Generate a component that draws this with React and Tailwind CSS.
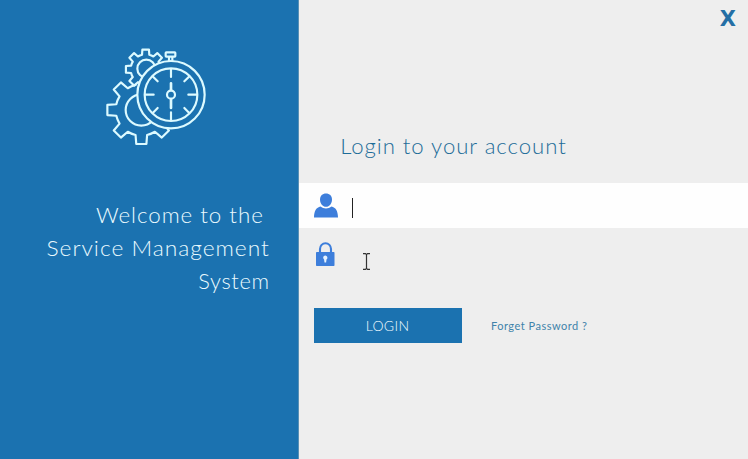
const gearPath = (cx, cy, root, tip, baseHalf, tipHalf) => {
  const point = (r, deg) => {
    const a = (deg * Math.PI) / 180;
    return `${(cx + r * Math.cos(a)).toFixed(1)} ${(cy + r * Math.sin(a)).toFixed(1)}`;
  };
  let d = "";
  for (let i = 0; i < 8; i++) {
    const a = i * 45;
    d += `${i === 0 ? "M" : `A${root} ${root} 0 0 1 `}${point(root, a - baseHalf)}`;
    d += `L${point(tip, a - tipHalf)}L${point(tip, a + tipHalf)}L${point(root, a + baseHalf)}`;
  }
  return `${d}A${root} ${root} 0 0 1 ${point(root, -baseHalf)}Z`;
};

function ServiceLogo() {
  return (
    <svg
      className="block h-[115px] w-[120px] fill-[#1b72b0] stroke-[#dcfaff]"
      viewBox="0 0 360 345"
      strokeWidth="6.5"
      strokeLinejoin="round"
      strokeLinecap="round"
    >
      <path d={gearPath(139, 210, 77, 103, 13, 8.5)} />
      <circle cx="139" cy="210" r="47" />
      <path d={gearPath(152, 88, 45, 60, 14, 9.5)} />
      <circle cx="154" cy="86" r="27" />
      <path d="M222 50v14M232 50v14" />
      <rect x="212" y="37" width="29" height="13" rx="2" />
      <circle cx="228" cy="164" r="101" />
      <circle cx="228" cy="164" r="79" />
      <path d="M228 87v24M228 217v24M151 164h25M280 164h25M174 110l14 14M268 204l14 14M174 218l14-14M268 124l14-14" />
      <path d="M228 130v21M228 177v27" strokeWidth="8" />
      <circle cx="228" cy="164" r="12" />
    </svg>
  );
}

function UserIcon() {
  return (
    <svg className="block h-[25px] w-[24px] fill-[#3d7edb]" viewBox="0 0 24 25">
      <path d="M12 0.500C8.500 0.500 6 2.800 6 6.500c0 4 2.600 7.300 6 7.300s6-3.300 6-7.300C18 2.800 15.500 0.500 12 0.500Z" />
      <path d="M6.500 13.500C9.500 16 14.500 16 17.500 13.500C21.500 14.300 24 18 24 24.500H0C0 18 2.500 14.300 6.500 13.500Z" />
    </svg>
  );
}

function LockIcon() {
  return (
    <svg className="block h-[25px] w-[19px]" viewBox="0 0 19 25">
      <path d="M4 12V7a5.500 5.800 0 0 1 11 0V12" fill="none" stroke="#3d7edb" strokeWidth="2.100" />
      <rect y="10" width="18.500" height="14" rx="0.700" fill="#3d7edb" />
      <path d="M9.200 13.500a2.200 2.200 0 0 1 1.300 4l-.4 3H8.500l-.4-3a2.200 2.200 0 0 1 1.100-4Z" fill="#e5f2ff" />
    </svg>
  );
}

export default function App() {
  return (
    <div className="flex h-[459px] w-[748px] overflow-hidden bg-[#eeeeee] font-['Century_Gothic','Lato',sans-serif]">
      <aside className="h-full w-[299px] shrink-0 border-r border-[#5a91b5] bg-[#1b72b0] pt-10">
        <div className="pl-[95px]">
          <ServiceLogo />
        </div>
        <div className="mt-[43px] flex flex-col items-end pr-7 text-[21px] leading-[33px] font-light text-[#eafaff]">
          <p className="mr-[6px] origin-right scale-x-[1.064] tracking-[0.9px]">Welcome to the</p>
          <p className="origin-right scale-x-[1.085] tracking-[0.9px]">Service Management</p>
          <p className="origin-right scale-x-[1.04] tracking-[0.6px]">System</p>
        </div>
      </aside>

      <main className="flex min-w-0 flex-1 flex-col">
        <div className="flex h-[130px] justify-end pt-1 pr-3">
          <button className="h-[30px] font-['DejaVu_Sans',sans-serif] text-[21px] leading-[30px] font-bold text-[#246fa5]">
            X
          </button>
        </div>
        <h1 className="h-[53px] origin-left scale-x-[1.056] pl-[39px] text-[21px] leading-[31px] font-light tracking-[0.9px] whitespace-nowrap text-[#1d6c98]">
          Login to your account
        </h1>
        <div className="flex h-[45px] items-center bg-[#fefefe] pl-[15px]">
          <UserIcon />
          <div className="mt-1 ml-[14px] h-5 w-px bg-[#222222]" />
        </div>
        <div className="flex h-[80px] items-start pt-[14px] pl-[17px]">
          <LockIcon />
          <svg className="mt-[11px] ml-[27px] h-[17px] w-[9px]" viewBox="0 0 9 17" fill="none" stroke="#333333" strokeWidth="1.200">
            <path d="M1 .700h2.500l1 1 1-1H8M4.500 1.500v14M1 16.300h2.500l1-1 1 1H8" />
          </svg>
        </div>
        <div className="flex h-[35px] items-center pl-[15px]">
          <button className="h-[35px] w-[148px] bg-[#1b72b0] pr-px text-[14px] font-light tracking-[0.3px] text-[#f0fcff]">
            LOGIN
          </button>
          <a className="mt-[2px] ml-[29px] text-[11px] tracking-[0.500px] whitespace-nowrap text-[#3f83aa]">
            Forget Password ?
          </a>
        </div>
      </main>
    </div>
  );
}
